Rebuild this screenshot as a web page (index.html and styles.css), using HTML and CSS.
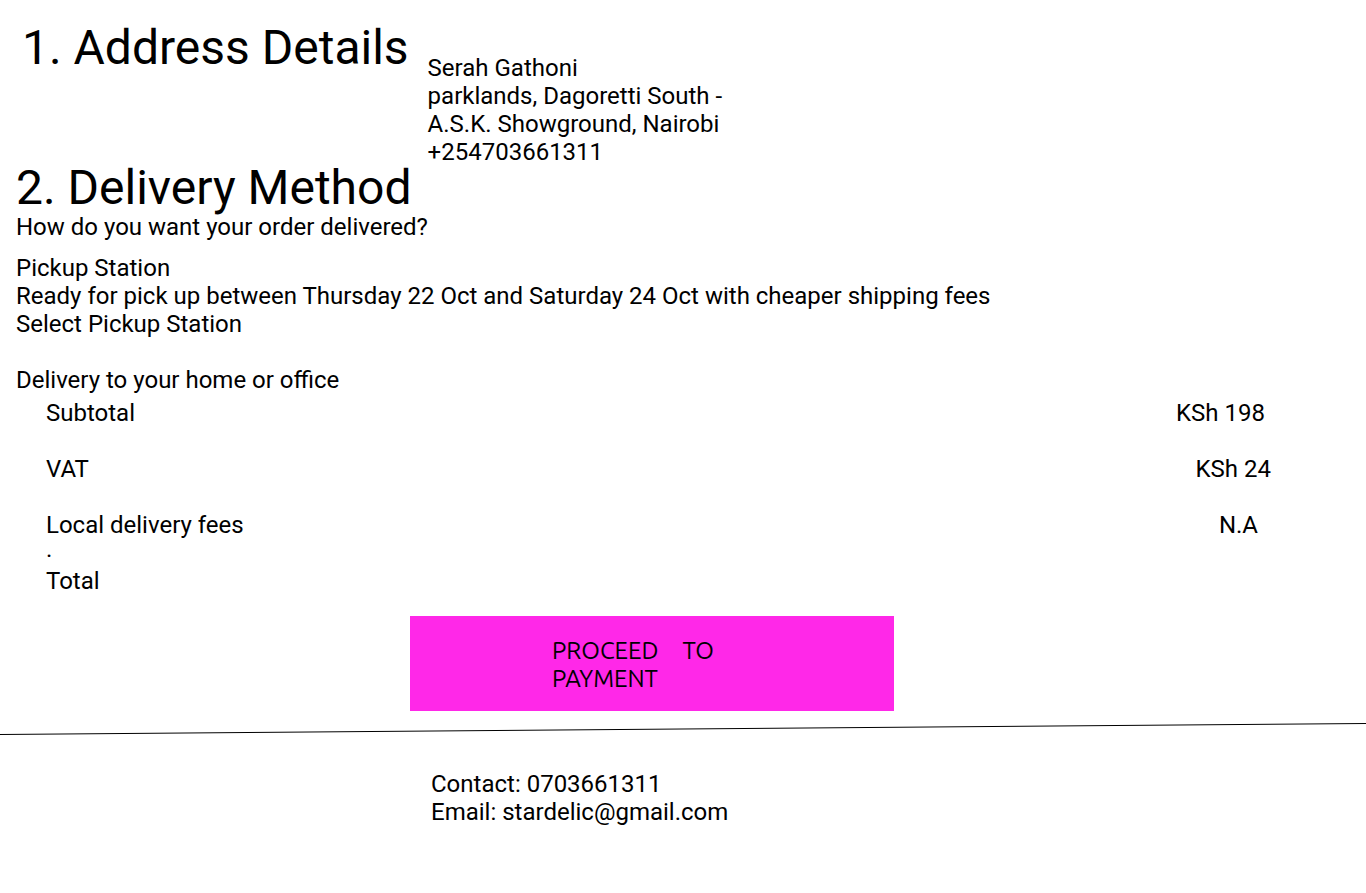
FILE: index.html
```html
<!DOCTYPE html>
<html>
<head>
<meta charset="utf-8">
<link rel="stylesheet" href="styles.css">
</head>
<body>
<main class="page">
  <section class="address">
    <h1 class="title title-address">1. Address Details</h1>
    <div class="address-info">
      <p>Serah Gathoni</p>
      <p>parklands, Dagoretti South -</p>
      <p>A.S.K. Showground, Nairobi</p>
      <p>+254703661311</p>
    </div>
  </section>
  <section class="delivery">
    <h2 class="title">2. Delivery Method</h2>
    <p>How do you want your order delivered?</p>
    <div class="option">
      <p>Pickup Station</p>
      <p>Ready for pick up between Thursday 22 Oct and Saturday 24 Oct with cheaper shipping fees</p>
      <p>Select Pickup Station</p>
    </div>
    <div class="option option-home">
      <p>Delivery to your home or office</p>
    </div>
  </section>
  <section class="summary">
    <div class="row"><span>Subtotal</span><span class="val val-sub">KSh 198</span></div>
    <div class="row"><span>VAT</span><span class="val val-vat">KSh 24</span></div>
    <div class="row row-last"><span>Local delivery fees</span><span class="val val-na">N.A</span></div>
    <div class="dot">.</div>
    <div class="total">Total</div>
  </section>
  <div class="btn-wrap">
    <button class="proceed"><span>PROCEED TO PAYMENT</span></button>
  </div>
  <svg class="divider" width="1366" height="14" viewBox="0 0 1366 14">
    <line x1="0" y1="12.5" x2="1366" y2="1.5" stroke="#000" stroke-width="1"/>
  </svg>
  <footer class="footer">
    <p>Contact: 0703661311</p>
    <p>Email: stardelic@gmail.com</p>
  </footer>
</main>
</body>
</html>
```

FILE: styles.css
```css
html, body {
  margin: 0;
  padding: 0;
  background: #fff;
}
body {
  font-family: Roboto, "Liberation Sans", sans-serif;
  color: #000;
  font-size: 24px;
  line-height: 28px;
}
p { margin: 0; }
.page {
  display: flex;
  flex-direction: column;
}
.address {
  display: flex;
  align-items: flex-start;
  padding-left: 22px;
  padding-top: 17px;
}
.title {
  font-size: 48px;
  font-weight: 400;
  line-height: 56px;
  margin: 0;
}
.title-address {
  margin-top: 3px;
}
.address-info {
  margin-left: 19px;
  margin-top: 37px;
}
.delivery {
  padding-left: 16px;
}
.delivery .title {
  margin-top: -3px;
  line-height: 50px;
}
.option { margin-top: 13px; }
.option-home { margin-top: 28px; }
.summary {
  padding-left: 46px;
  padding-right: 101px;
  margin-top: 5px;
}
.row {
  display: flex;
  justify-content: space-between;
  height: 56px;
}
.row-last { height: 28px; }
.val-vat { margin-right: -6px; }
.val-na { margin-right: 7px; }
.dot { height: 28px; line-height: 20px; }
.total { height: 28px; }
.btn-wrap {
  padding-left: 410px;
  margin-top: 21px;
}
.proceed {
  width: 484px;
  height: 95px;
  background: #ff28e8;
  border: none;
  padding: 2px 0 0 142px;
  text-align: left;
  font-family: Ubuntu, Lato, "Open Sans", sans-serif;
  font-size: 24px;
  line-height: 28px;
  color: #000;
}
.proceed span {
  display: block;
  width: 162px;
  text-align: justify;
}
.divider {
  display: block;
  margin-top: 11px;
}
.footer {
  padding-left: 431px;
  margin-top: 34px;
}
```
